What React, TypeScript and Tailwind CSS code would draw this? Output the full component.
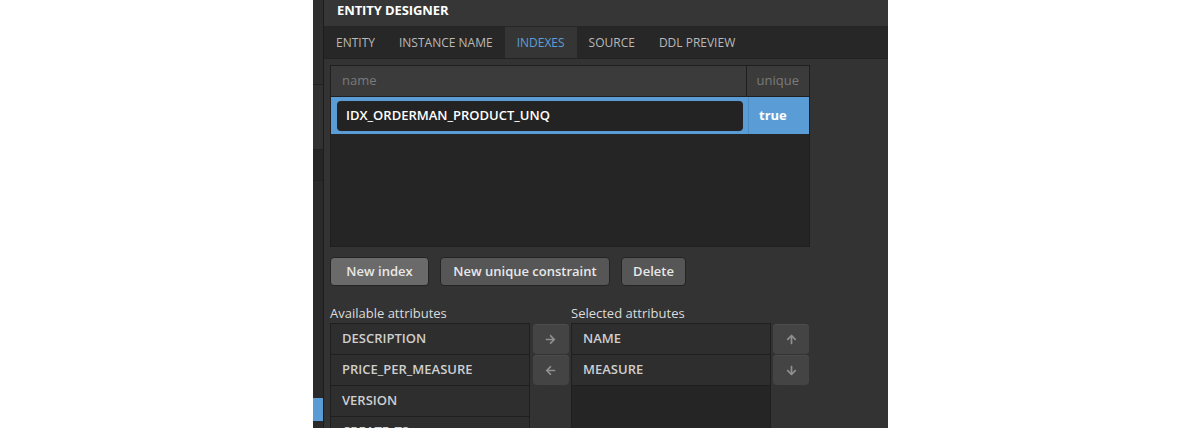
import React from 'react';
import { FaArrowRight, FaArrowLeft, FaArrowUp, FaArrowDown } from 'react-icons/fa';

const tabs = ['ENTITY', 'INSTANCE NAME', 'INDEXES', 'SOURCE', 'DDL PREVIEW'];
const available = ['DESCRIPTION', 'PRICE_PER_MEASURE', 'VERSION', 'CREATE_TS'];
const selected = ['NAME', 'MEASURE'];

function SideButton({ children }: { children: React.ReactNode }) {
  return (
    <div className="h-[30px] w-[36px] rounded-[4px] bg-[#444444] flex items-center justify-center text-[#8f8f8f] shadow-[inset_0_1px_0_#4c4c4c]">
      {children}
    </div>
  );
}

function Button({ label, width, active }: { label: string; width: string; active?: boolean }) {
  return (
    <button
      className={
        'h-[29px] rounded-[4px] border border-[#232323] text-[13px] font-semibold text-[#e8e8e8] ' +
        width +
        (active ? ' bg-[#6a6a6a]' : ' bg-[#565656]')
      }
    >
      {label}
    </button>
  );
}

export default function App() {
  return (
    <div className="w-full h-[428px] bg-white flex overflow-hidden" style={{ fontFamily: '"Open Sans", "Liberation Sans", sans-serif' }}>
      <div className="w-[313px] shrink-0" />

      {/* left neighbour strip */}
      <div className="w-[11px] shrink-0 flex flex-col border-r border-[#1c1c1c]">
        <div className="h-[85px] shrink-0 bg-[#2e2e2e] border-b border-[#222]" />
        <div className="h-[65px] shrink-0 bg-[#313131] border-b border-[#222]" />
        <div className="h-[31px] shrink-0 bg-[#262626] border-b border-[#222]" />
        <div className="h-[217px] shrink-0 bg-[#2a2a2a]" />
        <div className="h-[23px] shrink-0 bg-[#5a9dd6]" />
        <div className="flex-1 bg-[#2a2a2a]" />
      </div>

      {/* entity designer panel */}
      <div className="w-[564px] shrink-0 flex flex-col bg-[#333333] overflow-hidden">
        <div className="h-[27px] shrink-0 bg-[#363636] border-b border-[#262626] flex items-start pt-[1px] px-[13px]">
          <span className="text-[13px] leading-[18px] font-bold text-white tracking-[-0.1px]">ENTITY DESIGNER</span>
        </div>
        <div className="h-[32px] shrink-0 bg-[#272727] border-b border-[#232323] flex">
          {tabs.map((t) => (
            <div
              key={t}
              className={
                'h-full flex items-center px-[12px] text-[12px] font-medium ' +
                (t === 'INDEXES' ? 'bg-[#353535] text-[#5aa0d8]' : 'text-[#b9b9b9]')
              }
            >
              {t}
            </div>
          ))}
        </div>

        <div className="flex-1 pl-[6px] pt-[6px]">
          {/* index table */}
          <div className="w-[480px] h-[182px] border border-[#1f1f1f] bg-[#252525] flex flex-col">
            <div className="h-[31px] shrink-0 flex bg-[#3b3b3b] border-b border-[#1f1f1f]">
              <div className="w-[418px] flex items-center px-[11px] text-[13px] text-[#7a7a7a] border-r border-[#1f1f1f]">name</div>
              <div className="flex-1 flex items-center px-[10px] text-[13px] text-[#7a7a7a]">unique</div>
            </div>
            <div className="h-[37px] shrink-0 flex bg-[#5a9dd6]">
              <div className="w-[418px] flex items-center pl-[6px] pr-[5px] border-r border-[#4d8cc2]">
                <div className="w-full h-[30px] rounded-[4px] bg-[#232323] flex items-center px-[9px] text-[13px] font-semibold text-white">
                  IDX_ORDERMAN_PRODUCT_UNQ
                </div>
              </div>
              <div className="flex-1 flex items-center px-[10px] text-[13px] font-bold text-white">true</div>
            </div>
          </div>

          {/* buttons */}
          <div className="flex gap-[11px] mt-[10px]">
            <Button label="New index" width="w-[99px]" active />
            <Button label="New unique constraint" width="w-[170px]" />
            <Button label="Delete" width="w-[65px]" />
          </div>

          {/* attribute lists */}
          <div className="flex mt-[18px]">
            <div className="w-[200px]">
              <div className="text-[13px] text-[#dcdcdc] h-[19px] leading-[19px]">Available attributes</div>
              <div className="border border-[#1f1f1f] bg-[#252525] h-[130px]">
                {available.map((a) => (
                  <div key={a} className="h-[31px] border-b border-[#1f1f1f] bg-[#2e2e2e] flex items-center px-[11px] text-[13px] font-semibold text-[#cfcfcf]">
                    {a}
                  </div>
                ))}
              </div>
            </div>
            <div className="w-[41px] pt-[20px] flex flex-col items-center gap-[1px]">
              <SideButton>
                <FaArrowRight size={11} />
              </SideButton>
              <SideButton>
                <FaArrowLeft size={11} />
              </SideButton>
            </div>
            <div className="w-[200px]">
              <div className="text-[13px] text-[#dcdcdc] h-[19px] leading-[19px]">Selected attributes</div>
              <div className="border border-[#1f1f1f] bg-[#252525] h-[130px]">
                {selected.map((a) => (
                  <div key={a} className="h-[31px] border-b border-[#1f1f1f] bg-[#2e2e2e] flex items-center px-[11px] text-[13px] font-semibold text-[#cfcfcf]">
                    {a}
                  </div>
                ))}
              </div>
            </div>
            <div className="w-[40px] pt-[20px] flex flex-col items-center gap-[1px]">
              <SideButton>
                <FaArrowUp size={11} />
              </SideButton>
              <SideButton>
                <FaArrowDown size={11} />
              </SideButton>
            </div>
          </div>
        </div>
      </div>

      <div className="flex-1" />
    </div>
  );
}
